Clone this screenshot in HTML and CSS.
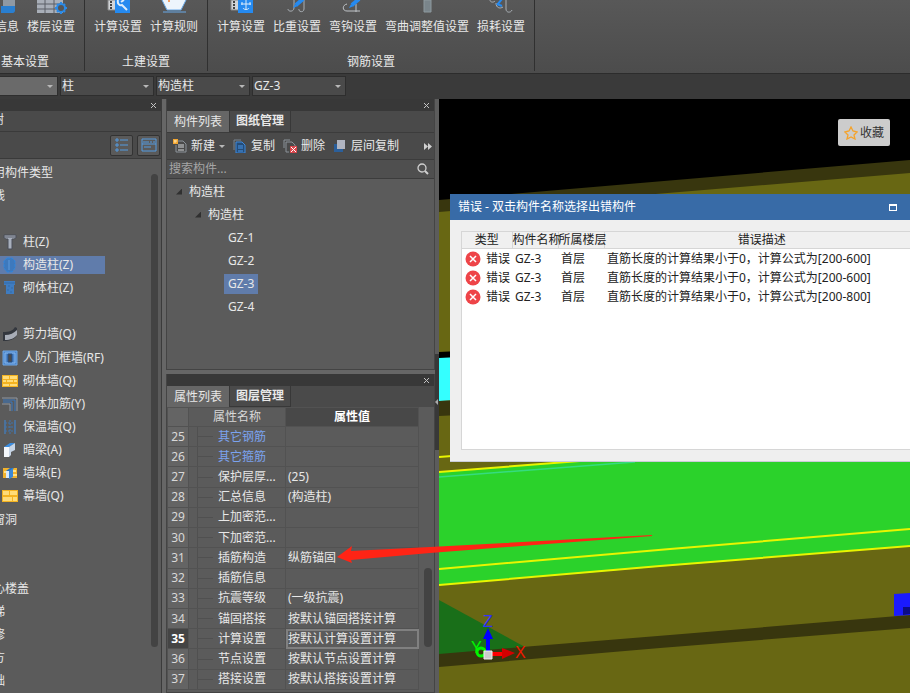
FILE: index.html
```html
<!DOCTYPE html>
<html lang="zh-CN">
<head>
<meta charset="utf-8">
<title>钢筋算量</title>
<link rel="stylesheet" href="styles.css">
</head>
<body>
<div class="app">
  <header class="ribbon">
    <section class="group group-first">
      <div class="tools">
        <button class="tool"><svg width="24" height="14" viewBox="0 0 24 14"><path d="M8 0h12v11H8z" fill="#8f99a3"/><path d="M6 6h14v4c0 3-2 3-3 3H6z" fill="#2a7fd0"/></svg>信息</button>
        <button class="tool"><svg width="32" height="14" viewBox="0 0 32 14"><path d="M2 0h26v13H2z" fill="#a9afb8"/><path d="M2 4h26M2 9h26M10 0v13M19 0v13" stroke="#5a5f66" stroke-width="1"/><circle cx="26" cy="8" r="4" fill="#555" stroke="#2b8ae6" stroke-width="2"/><path d="M26 2v2M26 12v2M20 8h2M30 8h2M22 4l1 1M29 11l1 1M30 4l-1 1M22 12l1-1" stroke="#2b8ae6" stroke-width="2"/></svg>楼层设置</button>
      </div>
      <h2>基本设置</h2>
    </section>
    <section class="group">
      <div class="tools">
        <button class="tool"><svg width="24" height="14" viewBox="0 0 24 14"><path d="M2 0h8v10H2z" fill="#d2d5d8" stroke="#888"/><path d="M4 2h2M4 5h2M4 8h2" stroke="#444" stroke-width="2"/><path d="M9 0h15v13H9z" fill="#258af0"/><path d="M12 0c-1 4 2 6 4 5l5 5" fill="none" stroke="#dcecfb" stroke-width="2"/><path d="M15 2l3-2" stroke="#dcecfb" stroke-width="2"/></svg>计算设置</button>
        <button class="tool"><svg width="26" height="14" viewBox="0 0 26 14"><path d="M1 0h24l-5 10H6z" fill="#edf5fc"/><path d="M1 0l5 10h14l5-10M2 12h23" fill="none" stroke="#68a9e8"/><circle cx="8" cy="1" r="1" fill="#f08030"/></svg>计算规则</button>
      </div>
      <h2>土建设置</h2>
    </section>
    <section class="group">
      <div class="tools">
        <button class="tool"><svg width="24" height="14" viewBox="0 0 24 14"><path d="M2 0h8v10H2z" fill="#d2d5d8" stroke="#888"/><path d="M4 2h2M4 5h2M4 8h2" stroke="#444" stroke-width="2"/><path d="M9 0h15v13H9z" fill="#258af0"/><path d="M17 0v10M12 4h10M13 2v3M21 2v3M14 8c1 2 5 2 6 0" fill="none" stroke="#dcecfb"/></svg>计算设置</button>
        <button class="tool"><svg width="24" height="14" viewBox="0 0 24 14"><path d="M9 0v8c0 4-6 4-6 1M19 0v9c0 4-6 3-5 0" fill="none" stroke="#aab0b6" stroke-width="1"/><path d="M11 5l7-6" stroke="#258af0" stroke-width="4"/><path d="M8 8l2-4 3 2z" fill="#258af0"/></svg>比重设置</button>
        <button class="tool"><svg width="24" height="14" viewBox="0 0 24 14"><path d="M6 4c-5 1-5 7 0 7h13M15 4v8" fill="none" stroke="#c0c4c8"/><path d="M11 5l7-6" stroke="#258af0" stroke-width="4"/><path d="M8 8l2-4 3 2z" fill="#258af0"/></svg>弯钩设置</button>
        <button class="tool"><svg width="24" height="14" viewBox="0 0 24 14"><path d="M9 0h7v12H9z" fill="#7a858b" stroke="#8d999e"/></svg>弯曲调整值设置</button>
        <button class="tool"><svg width="26" height="14" viewBox="0 0 26 14"><path d="M2 0c0 2 3 3 5 1M8 3c0 5 4 6 7 4M18 0v9c0 4 5 4 6 1" fill="none" stroke="#aab0b6"/><path d="M9 5l5-6M9 4l5 2" fill="none" stroke="#258af0" stroke-width="2"/></svg>损耗设置</button>
      </div>
      <h2>钢筋设置</h2>
    </section>
  </header>

  <div class="filters">
    <span class="combo combo-floor"><select aria-label="楼层"><option></option></select></span>
    <span class="combo"><select aria-label="构件大类"><option>柱</option></select></span>
    <span class="combo"><select aria-label="构件类型"><option>构造柱</option></select></span>
    <span class="combo"><select aria-label="构件"><option>GZ-3</option></select></span>
  </div>

  <main class="workspace">
    <aside class="nav panel">
      <div class="titlebar"><button class="close" aria-label="关闭"><svg width="7" height="7" viewBox="0 0 7 7"><path d="M1 1l5 5M6 1l-5 5" stroke="#c4c4c4" stroke-width="1"/></svg></button></div>
      <div class="nav-heading">树</div>
      <div class="nav-tools">
        <button aria-label="列表"><svg width="14" height="14" viewBox="0 0 14 14"><path d="M1 1h2v2H1zM1 6h2v2H1zM1 11h2v2H1zM5 2h8M5 7h8M5 12h8" fill="none" stroke="#559be0"/></svg></button>
        <button aria-label="面板"><svg width="16" height="14" viewBox="0 0 16 14"><path d="M1 1h14v12H1zM1 6h14M3 9h7" fill="none" stroke="#559be0"/><path d="M3 3v2M5 3v2M7 3v2M9 4h2M12 4h2" stroke="#559be0"/></svg></button>
      </div>
      <div class="nav-body">
        <ul class="types">
          <li class="cat">用构件类型</li>
          <li class="cat">线</li>
          <li></li>
          <li><a href="#z1"><svg width="16" height="16" viewBox="0 0 16 16"><path d="M2 1h12v3l-2 1h-2v10H6V5H4L2 4z" fill="#a9b0bd" stroke="#4b4f58"/><path d="M2 3h12" stroke="#565b66"/></svg>柱(Z)</a></li>
          <li><a href="#z2" class="selected"><svg width="16" height="16" viewBox="0 0 16 16"><path d="M5 1h5l3 3v7l-3 4H5l-3-4V4z" fill="#3d79bd" stroke="#2e86df" stroke-dasharray="3 1"/><path d="M7 3v10" stroke="#5f9bdc"/></svg>构造柱(Z)</a></li>
          <li><a href="#z3"><svg width="16" height="16" viewBox="0 0 16 16"><path d="M2 1h11v4h-1v9H4V5H2z" fill="#3f7cc0"/><path d="M2 3h11M6 6h2M9 8h2M5 10h2M8 12h2" stroke="#346aa5"/></svg>砌体柱(Z)</a></li>
          <li></li>
          <li><a href="#q1"><svg width="16" height="16" viewBox="0 0 16 16"><path d="M1 6c6 0 10-1 12-5l2 1v7c-2 4-7 6-14 6z" fill="#33373e"/><path d="M3 9c5 0 9-2 12-5v5c-2 3-7 5-12 5z" fill="#a8adb7"/></svg>剪力墙(Q)</a></li>
          <li><a href="#rf"><svg width="16" height="16" viewBox="0 0 16 16"><path d="M1 1h14v14H1z" fill="#4c86cc" stroke="#6fa7e5"/><path d="M3 3h10v10H3z" fill="none" stroke="#86b6ea"/><path d="M6 4h4v8H6z" fill="#4b4b4b" stroke="#244e86"/></svg>人防门框墙(RF)</a></li>
          <li><a href="#q2"><svg width="16" height="16" viewBox="0 0 16 16"><path d="M0 2h16v12H0z" fill="#f4b321"/><path d="M1 3h6v3H1zM8 3h7v3H8zM1 7h3v2H1zM5 7h6v2H5zM12 7h3v2h-3zM1 11h6v2H1zM8 11h7v2H8z" fill="#ffdc78"/></svg>砌体墙(Q)</a></li>
          <li><a href="#y"><svg width="16" height="16" viewBox="0 0 16 16"><path d="M0 2h15v13M0 8h8v7" fill="none" stroke="#8f97a2"/><path d="M1 4h12v11M1 6h9v9" fill="none" stroke="#3979c2"/></svg>砌体加筋(Y)</a></li>
          <li><a href="#q3"><svg width="16" height="16" viewBox="0 0 16 16"><path d="M3 1v14M13 1v14" stroke="#3f88d8"/><path d="M8 1v14M3 4h10M3 8h10M3 12h10" stroke="#3f75ae" stroke-dasharray="2 1"/></svg>保温墙(Q)</a></li>
          <li><a href="#a"><svg width="16" height="16" viewBox="0 0 16 16"><path d="M2 5l6-4h5L7 5z" fill="#398de2"/><path d="M2 5h5v10H2z" fill="#f4f7fb"/><path d="M7 5l6-4v7l-4 2v3l-2 2z" fill="#c6d4e5"/></svg>暗梁(A)</a></li>
          <li><a href="#e"><svg width="16" height="16" viewBox="0 0 16 16"><path d="M1 3h14v10H1z" fill="#f2b22c"/><path d="M2 7h4M10 6h4M11 10h4" stroke="#ffe08a" stroke-width="2"/><path d="M4 6l4-3h4L9 6z" fill="#286fbc"/><path d="M4 6h3v7H4z" fill="#d7e9fb"/><path d="M7 6l4-3v9l-4 2z" fill="#3b88d7"/></svg>墙垛(E)</a></li>
          <li><a href="#q4"><svg width="16" height="16" viewBox="0 0 16 16"><path d="M0 2h16v12H0z" fill="#f4b321"/><path d="M1 3h6v4H1zM8 3h7v4H8zM1 9h9v4H1zM11 9h4v4h-4z" fill="#ffdc78"/></svg>幕墙(Q)</a></li>
          <li class="cat">窗洞</li>
          <li></li>
          <li></li>
          <li class="cat">心楼盖</li>
          <li class="cat">梯</li>
          <li class="cat">修</li>
          <li class="cat">方</li>
          <li class="cat">础</li>
        </ul>
        <div class="nav-scroll"><div class="thumb"></div></div>
      </div>
    </aside>

    <div class="middle">
      <section class="panel components">
        <div class="titlebar"><button class="close" aria-label="关闭"><svg width="7" height="7" viewBox="0 0 7 7"><path d="M1 1l5 5M6 1l-5 5" stroke="#c4c4c4" stroke-width="1"/></svg></button></div>
        <div class="tabs"><button class="tab active">构件列表</button><button class="tab">图纸管理</button></div>
        <div class="actions">
          <button><svg width="14" height="14" viewBox="0 0 14 14"><path d="M4 2h6l3 3v8H3V6" fill="none" stroke="#8b9299"/><path d="M5 6h6M5 8h6M5 11h6" stroke="#d5d8db"/><path d="M0 0h5v5H0z" fill="#f2a632"/><path d="M1 2h3M2 1v3" stroke="#ffe2a6"/></svg>新建<i class="caret"></i></button>
          <button><svg width="14" height="14" viewBox="0 0 14 14"><path d="M1 11V1h7" fill="none" stroke="#77838f"/><path d="M3 3h6l3 3v8H3z" fill="#244c78" stroke="#3c8ae0"/><path d="M5 7h5M5 9h5M5 12h5" stroke="#4b96e8"/></svg>复制</button>
          <button><svg width="14" height="14" viewBox="0 0 14 14"><path d="M1 9V1h6M3 13V3h6l3 3v2M3 13h3" fill="none" stroke="#8b9299"/><path d="M7 7h7v7H7z" fill="#d9474d"/><path d="M8 8l5 5M13 8l-5 5" stroke="#fff"/></svg>删除</button>
          <button><svg width="14" height="14" viewBox="0 0 14 14"><path d="M1 5h9v8H1z" fill="#2b5f9a"/><path d="M4 1h8v9H4z" fill="#b1b5c1"/></svg>层间复制</button>
          <button class="more" aria-label="更多"><svg width="8" height="7" viewBox="0 0 8 7"><path d="M0 0l4 3.500-4 3.500zM4 0l4 3.500-4 3.500z" fill="#d0d0d0"/></svg></button>
        </div>
        <div class="search"><input type="text" placeholder="搜索构件..." aria-label="搜索构件"><svg width="12" height="12" viewBox="0 0 12 12"><circle cx="5" cy="5" r="4" fill="none" stroke="#cfcfcf" stroke-width="1.300"/><path d="M8 8l3 3" stroke="#cfcfcf" stroke-width="2"/></svg></div>
        <ul class="tree">
          <li class="level1"><i class="expander"></i>构造柱</li>
          <li class="level2"><i class="expander"></i>构造柱</li>
          <li class="level3"><span>GZ-1</span></li>
          <li class="level3"><span>GZ-2</span></li>
          <li class="level3"><span class="selected">GZ-3</span></li>
          <li class="level3"><span>GZ-4</span></li>
        </ul>
      </section>

      <section class="panel properties">
        <div class="titlebar"><button class="close" aria-label="关闭"><svg width="7" height="7" viewBox="0 0 7 7"><path d="M1 1l5 5M6 1l-5 5" stroke="#c4c4c4" stroke-width="1"/></svg></button></div>
        <div class="tabs"><button class="tab active">属性列表</button><button class="tab">图层管理</button></div>
        <div class="props-body">
          <table class="props">
            <colgroup><col class="c-num"><col class="c-name"><col></colgroup>
            <thead><tr><th></th><th>属性名称</th><th class="value-head">属性值</th></tr></thead>
            <tbody>
              <tr><th>25</th><td class="link">其它钢筋</td><td></td></tr>
              <tr><th>26</th><td class="link">其它箍筋</td><td></td></tr>
              <tr><th>27</th><td>保护层厚...</td><td>(25)</td></tr>
              <tr><th>28</th><td>汇总信息</td><td>(构造柱)</td></tr>
              <tr><th>29</th><td>上加密范...</td><td></td></tr>
              <tr><th>30</th><td>下加密范...</td><td></td></tr>
              <tr><th>31</th><td>插筋构造</td><td>纵筋锚固</td></tr>
              <tr><th>32</th><td>插筋信息</td><td></td></tr>
              <tr><th>33</th><td>抗震等级</td><td>(一级抗震)</td></tr>
              <tr><th>34</th><td>锚固搭接</td><td>按默认锚固搭接计算</td></tr>
              <tr class="current"><th>35</th><td>计算设置</td><td>按默认计算设置计算</td></tr>
              <tr><th>36</th><td>节点设置</td><td>按默认节点设置计算</td></tr>
              <tr><th>37</th><td>搭接设置</td><td>按默认搭接设置计算</td></tr>
            </tbody>
          </table>
          <div class="props-scroll"><div class="thumb"></div></div>
        </div>
      </section>
    </div>

    <div class="splitter"><div class="handle"></div></div>

    <section class="viewport">
      <svg class="scene" viewBox="439 99 471 594" preserveAspectRatio="none">
        <path d="M439 98h471v595H439z" fill="#000"/>
        <path d="M439 200L910 160V693H439z" fill="#38360e"/>
        <path d="M439 212L910 173V693H439z" fill="#686713"/>
        <path d="M439 352l20-1v10h-20z" fill="#000"/>
        <path d="M439 358l20-1v43l-20 1z" fill="#34ffff"/>
        <path d="M439 401l20-1v15l-20 1z" fill="#38360e"/>
        <path d="M439 472L580 461H910V546L439 585z" fill="#2bd22b"/>
        <path d="M439 457l141-11M439 472l141-11M439 569l231-20 240-20M439 585l221-19 250-20" fill="none" stroke="#e8f500" stroke-width="2"/>
        <path d="M439 477L635 462" stroke="#35dc80" stroke-width="1.500"/>
        <path d="M439 600l86 47-86 8z" fill="#196f19"/>
        <path d="M439 654L522 647L670 635L910 615V628L660 648L439 667z" fill="#38360e"/>
        <path d="M894 594l16-1v22l-16 1z" fill="#1a1aff"/><path d="M903 607h7v7l-7 1z" fill="#0c0c85"/>
        <circle cx="481" cy="652" r="4" fill="none" stroke="#00f500" stroke-width="3"/>
        <path d="M488 652V636" stroke="#00f" stroke-width="4"/><path d="M483 639l5-11 5 11z" fill="#00f"/>
        <path d="M492 654h11" stroke="#f00" stroke-width="4"/><path d="M502 648l13 5-13 6z" fill="#d40000"/>
        <path d="M484 651h8v8h-8z" fill="#ccc" stroke="#eee"/>
        <g class="axis-labels"><text x="483" y="627" fill="#3030ff">Z</text><text x="471" y="653" fill="#00f500">Y</text><text x="515" y="658" fill="#f01800">X</text></g>
      </svg>
      <button class="favorite"><svg width="14" height="14" viewBox="0 0 14 14"><path d="M7 1l2 4 4 1-3 3 1 4-4-2-4 2 1-4-3-3 4-1z" fill="none" stroke="#f5a32b" stroke-width="1.300"/></svg>收藏</button>
      <div class="dialog" role="dialog" aria-label="错误">
        <div class="dialog-title"><span>错误 - 双击构件名称选择出错构件</span><button aria-label="最大化"></button></div>
        <div class="dialog-body">
          <table class="errors">
            <colgroup><col class="e-type"><col class="e-name"><col class="e-floor"><col></colgroup>
            <thead><tr><th>类型</th><th>构件名称</th><th>所属楼层</th><th>错误描述</th></tr></thead>
            <tbody>
              <tr><td><span class="kind"><svg width="16" height="16" viewBox="0 0 16 16"><circle cx="8" cy="8" r="7.500" fill="#ee4448"/><path d="M5 5l6 6M11 5l-6 6" stroke="#fff" stroke-width="1.500"/></svg>错误</span></td><td>GZ-3</td><td>首层</td><td>直筋长度的计算结果小于0，计算公式为[200-600]</td></tr>
              <tr><td><span class="kind"><svg width="16" height="16" viewBox="0 0 16 16"><circle cx="8" cy="8" r="7.500" fill="#ee4448"/><path d="M5 5l6 6M11 5l-6 6" stroke="#fff" stroke-width="1.500"/></svg>错误</span></td><td>GZ-3</td><td>首层</td><td>直筋长度的计算结果小于0，计算公式为[200-600]</td></tr>
              <tr><td><span class="kind"><svg width="16" height="16" viewBox="0 0 16 16"><circle cx="8" cy="8" r="7.500" fill="#ee4448"/><path d="M5 5l6 6M11 5l-6 6" stroke="#fff" stroke-width="1.500"/></svg>错误</span></td><td>GZ-3</td><td>首层</td><td>直筋长度的计算结果小于0，计算公式为[200-800]</td></tr>
            </tbody>
          </table>
        </div>
      </div>
    </section>
    <svg class="pointer" width="320" height="32" viewBox="0 0 320 32"><path d="M1 23L16 12L15 17L94 13L316 1V2L94 19L15 26L16 29z" fill="#ff2415"/></svg>
  </main>
</div>
</body>
</html>
```
FILE: styles.css
```css
* { box-sizing: border-box; }

body {
  margin: 0;
  background: #383838;
  color: #e8e8e8;
  font: 12px/18px "Noto Sans", "Noto Sans CJK SC", sans-serif;
}

button, select, input {
  margin: 0;
  padding: 0;
  border: 0;
  background: none;
  color: inherit;
  font: inherit;
}

ul { margin: 0; padding: 0; list-style: none; }
svg { display: block; flex: none; }
table { border-collapse: collapse; table-layout: fixed; }
th, td { padding: 0; font-weight: 400; white-space: nowrap; }

.app {
  display: flex;
  flex-direction: column;
  height: 100vh;
  overflow: hidden;
}

/* Ribbon */
.ribbon {
  display: flex;
  height: 73px;
  padding-bottom: 2px;
  background: linear-gradient(#585858, #4c4c4c);
  overflow: hidden;
}

.group {
  display: flex;
  flex: none;
  flex-direction: column;
  justify-content: space-between;
  padding: 0 9px;
  border-right: 1px solid #303030;
}

.group-first { width: 119px; margin-left: -34px; }
.tools { display: flex; justify-content: flex-end; gap: 8px; }

.tool {
  display: flex;
  flex-direction: column;
  align-items: center;
  gap: 4px;
  white-space: nowrap;
}

.group h2 {
  margin: 0;
  font-size: 12px;
  font-weight: 400;
  text-align: center;
}

/* Filter bar */
.filters {
  display: flex;
  gap: 2px;
  height: 26px;
  padding: 2px 0 3px;
  border-top: 1px solid #2c2c2c;
  background: #3a3a3a;
}

.combo {
  position: relative;
  width: 94px;
  border: 1px solid #2e2e2e;
  background: #4a4a4a;
}

.combo-floor { width: 58px; border-left: 0; background: #6a6a6a; }

.combo select {
  width: 100%;
  height: 100%;
  padding-left: 1px;
  appearance: none;
}

.combo::after, .caret {
  border: 3px solid transparent;
  border-top-color: #b8b8b8;
  border-bottom: 0;
  content: "";
}

.combo::after { position: absolute; top: 8px; right: 4px; }

/* Docked panels */
.workspace {
  position: relative;
  display: grid;
  flex: 1;
  grid-template-columns: 162px 273px 4px 1fr;
  min-height: 0;
  background: #666;
}

.panel { display: flex; flex-direction: column; min-height: 0; background: #5b5b5b; }
.nav { border-right: 1px solid #3b3b3b; overflow: hidden; }

.titlebar {
  display: flex;
  flex: none;
  align-items: center;
  justify-content: flex-end;
  height: 12px;
  padding-right: 4px;
  background: #383838;
}

.nav-heading {
  flex: none;
  height: 21px;
  margin-left: -8px;
  border-bottom: 1px solid #3a3a3a;
  background: #4a4a4a;
}

.nav-tools {
  display: flex;
  flex: none;
  align-items: center;
  justify-content: flex-end;
  gap: 4px;
  height: 27px;
  padding-right: 1px;
  border-bottom: 1px solid #3a3a3a;
  background: #4a4a4a;
}

.nav-tools button {
  display: grid;
  place-items: center;
  width: 23px;
  height: 21px;
  border: 1px solid #333;
  border-radius: 2px;
  background: #5a5a5a;
}

.nav-body { display: flex; flex: 1; min-height: 0; padding-top: 2px; }

.types {
  display: grid;
  flex: 1;
  grid-template-rows: repeat(23, 1fr);
}

.types li { display: flex; align-items: center; min-height: 0; white-space: nowrap; }
.types .cat { margin-left: -7px; }

.types a {
  display: flex;
  align-items: center;
  gap: 5px;
  width: 105px;
  padding-left: 2px;
  color: inherit;
  text-decoration: none;
}

.types .selected, .tree .selected { background: #607cab; }
.nav-scroll { width: 10px; padding: 13px 3px 46px 0; }
.thumb { height: 100%; border-radius: 4px; background: #434343; }

.middle {
  display: flex;
  flex-direction: column;
  gap: 4px;
  min-width: 0;
  padding-left: 4px;
}

.middle .panel { border: 1px solid #444; border-top: 0; }
.components { flex: 0 0 271px; }
.properties { flex: 1; }

.tabs {
  display: flex;
  flex: none;
  height: 21px;
  background: #4a4a4a;
}

.tab {
  width: 62px;
  border: 1px solid #383838;
  border-top: 0;
  font-weight: 700;
  white-space: nowrap;
}

.tab.active { border: 0; background: #666; font-weight: 400; }

.actions {
  display: flex;
  flex: none;
  align-items: center;
  gap: 8px;
  height: 27px;
  padding: 0 2px 0 6px;
  border-top: 1px solid #3c3c3c;
  background: #4a4a4a;
}

.actions button { display: flex; align-items: center; gap: 4px; white-space: nowrap; }
.actions .more { margin-left: auto; }

.search {
  display: flex;
  flex: none;
  align-items: center;
  height: 20px;
  padding: 0 5px 0 2px;
  border: solid #3c3c3c;
  border-width: 1px 0;
  background: #4f4f4f;
}

.search input { flex: 1; min-width: 0; outline: 0; }
.search input::placeholder { color: #a5a5a5; }

.tree { padding-top: 1px; line-height: 23px; }
.tree li { display: flex; align-items: center; height: 23px; }
.tree .level1 { padding-left: 9px; }
.tree .level2 { padding-left: 28px; }
.tree .level3 { padding-left: 57px; }
.tree span { height: 20px; padding: 0 4px; line-height: 20px; }

.expander {
  width: 6px;
  height: 6px;
  margin-right: 7px;
  background: #303030;
  clip-path: polygon(100% 0, 100% 100%, 0 100%);
}

/* Property grid */
.props-body { display: flex; flex: 1; min-height: 0; padding-bottom: 2px; }
.props { flex: 1; width: 0; height: 100%; }
.c-num { width: 21px; }
.c-name { width: 97px; }
.props th, .props td { border: 1px solid #525252; line-height: 18px; }
.props th { background: #646464; color: #d8d8d8; }
.props thead th:nth-child(2) { background: #5b5b5b; }
.props thead .value-head { background: #484848; color: #fff; font-weight: 700; }
.props td:last-child { padding-left: 2px; }

.props td:nth-child(2) {
  padding-left: 29px;
  background: linear-gradient(#505050, #505050) 8px 50% / 16px 1px no-repeat,
    linear-gradient(#505050, #505050) 8px 0 / 1px 100% no-repeat;
}

.props .link { color: #7ba3ef; }
.props .current th { background: #444; color: #fff; font-weight: 700; }
.props .current td:last-child { outline: 2px solid #808080; outline-offset: -2px; }

.props-scroll {
  display: flex;
  flex-direction: column;
  justify-content: flex-end;
  width: 15px;
  padding: 0 2px 43px 5px;
}

.props-scroll .thumb { height: 79px; }

.splitter { display: flex; align-items: center; padding-top: 11px; background: #5c5c5c; }
.handle { display: flex; align-items: center; width: 4px; height: 96px; background: #383838; }
.handle::before { border: 3px solid transparent; border-left: 0; border-right-color: #aaa; content: ""; }

/* Model viewport */
.viewport { position: relative; overflow: hidden; }
.scene { width: 100%; height: 100%; }
.axis-labels { font: 16px "Liberation Sans", sans-serif; }

.favorite {
  position: absolute;
  top: 20px;
  right: 20px;
  display: flex;
  align-items: center;
  gap: 2px;
  height: 27px;
  padding: 0 6px;
  border-radius: 2px;
  background: #ccc;
  color: #333;
}

.dialog {
  position: absolute;
  top: 95px;
  right: -12px;
  left: 11px;
  border: solid #c9ccd8;
  border-width: 0 1px 1px 0;
  background: #efefef;
  color: #222;
}

.dialog-title {
  display: flex;
  align-items: center;
  justify-content: space-between;
  height: 26px;
  padding: 0 24px 0 8px;
  background: #386ba7;
  color: #fff;
}

.dialog-title button { width: 8px; height: 7px; border: 1px solid #fff; border-top-width: 2px; }

.dialog-body {
  height: 219px;
  margin: 11px 0 11px 11px;
  border: 1px solid #d6d6d6;
  background: #fff;
}

.errors { width: 100%; }
.errors thead { background: #f0f0f0; }
.errors th { height: 16px; border: solid #d6d6d6; border-width: 0 1px 1px 0; line-height: 16px; }
.errors th:nth-child(2), .errors th:nth-child(3) { text-align: left; }
.errors td { height: 19px; padding-left: 3px; line-height: 19px; }
.e-type { width: 50px; }
.e-name, .e-floor { width: 46px; }
.kind { display: flex; align-items: center; gap: 5px; }

.pointer { position: absolute; top: 435px; left: 336px; pointer-events: none; }
```
